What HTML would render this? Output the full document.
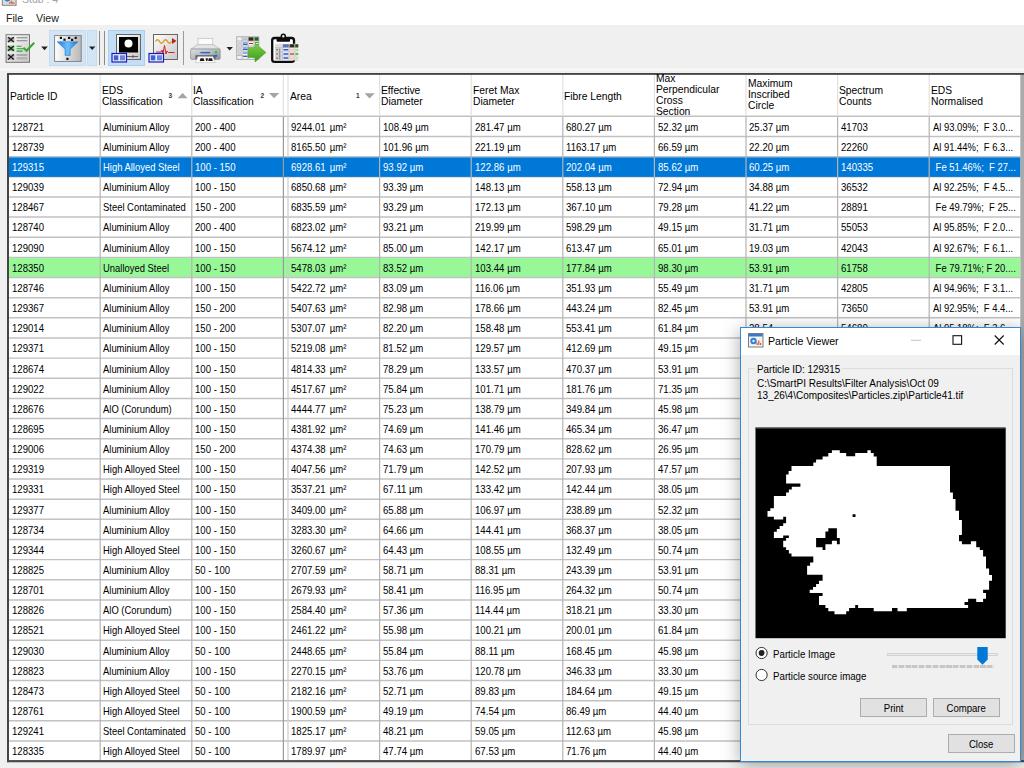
<!DOCTYPE html>
<html><head><meta charset="utf-8"><title>Stub : 4</title>
<style>
html,body{margin:0;padding:0;}
body{width:1024px;height:768px;overflow:hidden;background:#f0f0f0;position:relative;font-family:"Liberation Sans",sans-serif;color:#000;}
.abs{position:absolute;}
#menubar{position:absolute;left:0;top:0;width:1024px;height:25px;background:#fff;}
.menu{position:absolute;top:11.5px;font-size:11.3px;color:#222;white-space:nowrap;transform-origin:0 50%;transform:scaleX(.94);}
.c{position:absolute;font-size:10.8px;line-height:12px;white-space:pre;transform:scaleX(.915);transform-origin:0 50%;color:#000;}
.h{position:absolute;font-size:10.9px;line-height:11.1px;white-space:pre;transform:scaleX(.945);transform-origin:0 50%;color:#000;}
.sel .c{color:#fff;}
</style></head><body>

<div id="menubar"></div>
<svg class="abs" style="left:0;top:0;" width="70" height="8" viewBox="0 0 70 8"><rect x="2.3" y="-8" width="13.8" height="13.3" fill="#dcdcdc" stroke="#858585" stroke-width="1"/><path d="M4.8 -3h5.2v3.6q-2.6 2.200-5.2 0z" fill="#2f7fd8"/><path d="M9.6 3.8v-1.600M11.2 3.8v-3M12.8 3.8v-2M14.2 3.8v-1" stroke="#d8501e" stroke-width="1.1"/></svg>
<div class="abs" style="left:21.7px;top:-7.4px;font-size:11.3px;color:#a2a2a2;white-space:nowrap;transform:scaleX(.93);transform-origin:0 50%;">Stub : 4</div>
<div class="menu" style="left:6.2px;">File</div><div class="menu" style="left:35.6px;">View</div>
<div class="abs" style="left:49.2px;top:30.2px;width:36.6px;height:35.4px;background:#d3e5f5;border:1px solid #c3dcf2;box-sizing:border-box;"></div>
<div class="abs" style="left:87px;top:30.2px;width:9.8px;height:35.4px;background:#d3e5f5;border:1px solid #c3dcf2;box-sizing:border-box;"></div>
<div class="abs" style="left:108px;top:30px;width:37px;height:35.5px;background:#c4def5;border:1px solid #a9d0f2;box-sizing:border-box;"></div>
<div class="abs" style="left:99.3px;top:31px;width:1px;height:34px;background:#8a8a8a;"></div>
<div class="abs" style="left:104px;top:31px;width:1px;height:34px;background:#8a8a8a;"></div>
<div class="abs" style="left:183.2px;top:31px;width:1px;height:34px;background:#9a9a9a;"></div>
<svg class="abs" style="left:0;top:26px;" width="320" height="46" viewBox="0 26 320 46">
<defs>
<linearGradient id="gp" x1="0" y1="0" x2="1" y2="1"><stop offset="0" stop-color="#fdfdfd"/><stop offset="1" stop-color="#c8c8c8"/></linearGradient>
<linearGradient id="gp2" x1="0" y1="0" x2="1" y2="0"><stop offset="0" stop-color="#ffffff"/><stop offset="1" stop-color="#b8b8b8"/></linearGradient>
<linearGradient id="gpr" x1="0" y1="0" x2="1" y2="1"><stop offset="0" stop-color="#dfe1e3"/><stop offset="1" stop-color="#8f9296"/></linearGradient>
<linearGradient id="gf" x1="0" y1="0" x2="1" y2="0"><stop offset="0" stop-color="#167be0"/><stop offset=".5" stop-color="#6cc0fb"/><stop offset="1" stop-color="#167be0"/></linearGradient>
<linearGradient id="gg" x1="0" y1="0" x2="0" y2="1"><stop offset="0" stop-color="#7fd14a"/><stop offset="1" stop-color="#3f9a1c"/></linearGradient>
</defs>
<!-- icon1 checklist -->
<rect x="6.1" y="34.7" width="23.4" height="27.6" fill="url(#gp)" stroke="#747474" stroke-width="1"/>
<g fill="#b4b4b4"><rect x="7.4" y="36.8" width="7" height="5.6"/><rect x="7.4" y="45.6" width="7" height="5.6" fill="#7cc87c"/><rect x="7.4" y="54.2" width="7" height="5.6"/></g><g stroke="#1c1c1c" stroke-width="1.35" fill="none"><path d="M8 37.2l5.800 4.800m0-4.800l-5.800 4.800M8 46l5.800 4.800m0-4.800l-5.800 4.800M8 54.6l5.800 4.800m0-4.800l-5.800 4.800"/></g>
<g stroke="#808080" stroke-width="1.1"><path d="M16.6 37.8h10.8M16.6 40.8h10.8M16.6 55h10.8"/></g><rect x="16.6" y="57" width="10.8" height="2.6" fill="#b4b4b4"/>
<g stroke="#2da32d" stroke-width="1.1"><path d="M16.6 46.3h5M16.6 48.7h7M16.6 51.1h6"/></g>
<path d="M23.4 47.8l3.200 3L34.2 42.8" stroke="#35a835" stroke-width="2.1" fill="none"/>
<path d="M41.2 46.6h6.6l-3.3 3.6z" fill="#222"/>
<!-- icon2 filter -->
<rect x="54.6" y="35.6" width="26.6" height="25.8" fill="url(#gp2)" stroke="#7c7c7c" stroke-width=".9"/>
<path d="M57.3 41.8h20.6l-7.7 7.4v6.2h-5.2v-6.2z" fill="url(#gf)" stroke="#1876c9" stroke-width=".5"/>
<g fill="#111"><rect x="59.8" y="36.8" width="2.2" height="2.2"/><rect x="63.4" y="38.6" width="2.2" height="2.2"/><rect x="68" y="36.8" width="2.2" height="2.2"/><rect x="71" y="38.8" width="2.2" height="2.2"/><rect x="74.6" y="36.8" width="2.2" height="2.2"/><rect x="66.3" y="57.8" width="2.2" height="2.2"/></g>
<path d="M89 46.6h6.400l-3.200 3.400z" fill="#222"/>
<!-- icon3 particle image -->
<rect x="116.5" y="34.5" width="24" height="25" fill="url(#gp)" stroke="#666" stroke-width="1"/>
<rect x="119" y="37" width="19" height="15.5" fill="#000"/>
<circle cx="128.5" cy="43.5" r="4" fill="#fff"/>
<path d="M127 56.500h11M133 55v3" stroke="#444" stroke-width=".8"/>
<rect x="112" y="53.5" width="14.5" height="8.5" fill="#e8ecff" stroke="#1a1ab8" stroke-width="1.2"/>
<rect x="113.8" y="55.3" width="4.5" height="5" fill="#3a62d0"/><rect x="120" y="55.3" width="5" height="5" fill="#6a86d8"/>
<!-- icon4 spectrum -->
<rect x="153.5" y="34.5" width="24" height="25" fill="url(#gp)" stroke="#666" stroke-width="1"/>
<path d="M155.500 41.500q2-3.500 4 0t4 0 4 0 4 0" stroke="#d99a1a" stroke-width="1.4" fill="none"/>
<path d="M172 38l4.500 3-4.500 3z" fill="#c02020"/>
<path d="M156 52h5l1-2 1 3.500 1.500-8 1.500 8.500 1-3 1.500 1.500h6" stroke="#d02020" stroke-width="1" fill="none"/>
<rect x="149" y="53.5" width="14.5" height="8.5" fill="#e8ecff" stroke="#1a1ab8" stroke-width="1.2"/>
<rect x="150.8" y="55.3" width="4.5" height="5" fill="#3a62d0"/><rect x="157" y="55.3" width="5" height="5" fill="#6a86d8"/>
<!-- printer -->
<rect x="198" y="38.3" width="14.8" height="9.5" fill="#fbfbfb" stroke="#bdbdbd" stroke-width=".7"/>
<path d="M197.6 44.6h15.8l6.8 4.600h-29.400z" fill="#e2e4e6" stroke="#a6a8ab" stroke-width=".6"/>
<rect x="190.6" y="49" width="29.6" height="10.4" rx="1.3" fill="url(#gpr)" stroke="#8b8e92" stroke-width=".7"/>
<rect x="195.5" y="55.2" width="20" height="4.2" fill="#5a5c60"/>
<rect x="200.4" y="51.9" width="9.6" height="1.4" fill="#2c5fe0"/>
<rect x="214.7" y="51.2" width="2.6" height="2" fill="#35c435"/><rect x="214.7" y="54.7" width="2.6" height="2" fill="#2c62e0"/>
<path d="M195.5 62.600l2.3-6.200h15.200l2.3 6.200z" fill="#fdfdfd" stroke="#b0b0b0" stroke-width=".5"/>
<path d="M200.5 58.300h3l1 2.600h-4.800zM205.5 58.300h2.600l-.8 2.600h-1.200zM208.8 58.300h3.200l.8 2.600h-4.600z" fill="#1a1a1a"/>
<path d="M226.5 47h6.400l-3.2 3.400z" fill="#222"/>
<!-- table export -->
<rect x="236.8" y="36.8" width="22" height="22.5" fill="#f2f2f2" stroke="#9a9a9a" stroke-width=".8"/>
<path d="M242 36.800v22.500M248 36.800v22.500M254 36.800v22.500M236.800 41h22M236.800 46h22M236.800 51h22M236.800 55.500h22" stroke="#a8a8a8" stroke-width=".7"/>
<rect x="242.5" y="37.3" width="5" height="3.4" fill="#b9c3d8"/><rect x="248.5" y="37.3" width="5" height="3.4" fill="#3b2a18"/><rect x="254.5" y="37.3" width="4" height="3.4" fill="#275a27"/>
<rect x="237.5" y="42" width="4" height="3" fill="#cfcfcf"/><rect x="237.5" y="47" width="4" height="3.5" fill="#cfcfcf"/><rect x="237.5" y="52" width="4" height="3" fill="#cfcfcf"/>
<path d="M243 43h4.500M243 44.500h4.500M243 48h4.500M243 49.500h4.500M243 53h4.500M243 56.500h4.5" stroke="#2f62d8" stroke-width="1"/>
<path d="M249 43.500h4" stroke="#d02020" stroke-width="1"/><path d="M255 42.500h3.500M255 44.500h3.5" stroke="#34b234" stroke-width="1"/>
<path d="M248 47.500h7v-4.500l11 9.500-11 9.500v-4.500h-7z" fill="url(#gg)" stroke="#4aa522" stroke-width=".5"/>
<!-- clipboard -->
<rect x="272.2" y="38" width="21.8" height="23.8" rx="2.4" fill="#fff" stroke="#0c0c0c" stroke-width="2.3"/>
<rect x="276.6" y="38.2" width="13.4" height="3.6" rx=".8" fill="#0c0c0c"/>
<circle cx="283.3" cy="36.3" r="2" fill="#f0f0f0" stroke="#0c0c0c" stroke-width="1.5"/>
<rect x="275" y="43.8" width="23.3" height="16.4" fill="#f4f4f4"/>
<rect x="275" y="43.8" width="7.3" height="16.4" fill="#dedede"/>
<path d="M282.5 43.800v16.400M289.2 43.800v16.400M294.8 43.800v16.400M275 47.700h23.300M275 51.900h23.300M275 56h23.300M275 60.200h23.3" stroke="#b4b4b4" stroke-width=".6"/>
<rect x="283" y="44.2" width="5.8" height="3.2" fill="#5a74b8"/><rect x="289.6" y="44.2" width="4.8" height="3.2" fill="#3a2614"/><rect x="295.2" y="44.2" width="3.1" height="3.2" fill="#1f4f1f"/>
<path d="M283.4 49.800h5M283.4 54h5M283.4 58.100h5" stroke="#2b58e0" stroke-width="1.5"/>
<path d="M290 49.800h4M290 58.100h4" stroke="#f0b8a0" stroke-width="1.3"/><path d="M290 54h4" stroke="#d8481e" stroke-width="1.5"/>
<path d="M295.4 49.800h2.900M295.4 58.100h2.9" stroke="#8fdc8f" stroke-width="1.4"/><path d="M295.4 54h2.9" stroke="#22b022" stroke-width="1.5"/>
<path d="M276 49.800h2M276 54h2M276 58.100h2" stroke="#444" stroke-width=".9"/>
<path d="M279.6 48.400v11.4" stroke="#9a9a9a" stroke-width="1.6"/>
</svg>

<svg class="abs" style="left:0;top:0;" width="1024" height="768" viewBox="0 0 1024 768">
<rect x="0" y="68.6" width="1024" height="1.9" fill="#fafafa"/>
<rect x="7" y="73" width="1030" height="689.2" fill="#ababab"/>
<rect x="9" y="74.8" width="1011.3" height="685.4" fill="#fff"/>
<rect x="9" y="258.05" width="1011.3" height="19.25" fill="#98f898"/>
<path d="M9 116.30h1011.3 M9 136.45h1011.3 M9 156.60h1011.3 M9 176.75h1011.3 M9 196.90h1011.3 M9 217.05h1011.3 M9 237.20h1011.3 M9 257.35h1011.3 M9 277.50h1011.3 M9 297.65h1011.3 M9 317.80h1011.3 M9 337.95h1011.3 M9 358.10h1011.3 M9 378.25h1011.3 M9 398.40h1011.3 M9 418.55h1011.3 M9 438.70h1011.3 M9 458.85h1011.3 M9 479.00h1011.3 M9 499.15h1011.3 M9 519.30h1011.3 M9 539.45h1011.3 M9 559.60h1011.3 M9 579.75h1011.3 M9 599.90h1011.3 M9 620.05h1011.3 M9 640.20h1011.3 M9 660.35h1011.3 M9 680.50h1011.3 M9 700.65h1011.3 M9 720.80h1011.3 M9 740.95h1011.3" stroke="#c1c1c1" stroke-width="1.45" fill="none"/>
<rect x="9" y="157.30" width="1011.3" height="19.60" fill="#0078d7"/>
<path d="M100.20 116.3V760.2 M191.80 116.3V760.2 M379.60 116.3V760.2 M471.20 116.3V760.2 M562.80 116.3V760.2 M654.40 116.3V760.2 M746.00 116.3V760.2 M837.60 116.3V760.2 M929.20 116.3V760.2" stroke="#b4b4b4" stroke-width="1.2" fill="none"/>
<path d="M283.4 116.3V760.2" stroke="#9a9a9a" stroke-width="1.2" fill="none"/>
<path d="M288 116.3V157.30M288 176.75V760.2" stroke="#cdcdcd" stroke-width="1.2" fill="none"/>
<path d="M100.20 74.800V116.3 M191.80 74.800V116.3 M288.00 74.800V116.3 M379.60 74.800V116.3 M471.20 74.800V116.3 M562.80 74.800V116.3 M654.40 74.800V116.3 M746.00 74.800V116.3 M837.60 74.800V116.3 M929.20 74.800V116.3 M283.40 74.800V116.3" stroke="#e2e2e2" stroke-width="1.2" fill="none"/>
<path d="M8 73V762.200M7 73.900H1024M7 761.150H1024" stroke="#434343" stroke-width="0" fill="none"/>
<rect x="7" y="73" width="2" height="689.2" fill="#454545"/>
<rect x="7" y="73" width="1017" height="1.8" fill="#454545"/>
<rect x="7" y="760.1" width="1017" height="2.1" fill="#4a4a4a"/>
</svg>
<div class="h" style="left:10.2px;top:90.65px;">Particle ID</div>
<div class="h" style="left:101.8px;top:84.50px;">EDS<br>Classification</div>
<div class="h" style="left:193.4px;top:84.50px;">IA<br>Classification</div>
<div class="h" style="left:289.6px;top:90.65px;">Area</div>
<div class="h" style="left:381.2px;top:84.50px;">Effective<br>Diameter</div>
<div class="h" style="left:472.8px;top:84.50px;">Feret Max<br>Diameter</div>
<div class="h" style="left:564.4px;top:90.65px;">Fibre Length</div>
<div class="h" style="left:656.0px;top:72.60px;">Max<br>Perpendicular<br>Cross<br>Section</div>
<div class="h" style="left:747.6px;top:77.95px;">Maximum<br>Inscribed<br>Circle</div>
<div class="h" style="left:839.2px;top:84.50px;">Spectrum<br>Counts</div>
<div class="h" style="left:930.8px;top:84.50px;">EDS<br>Normalised</div>
<svg class="abs" style="left:160px;top:80px;" width="220" height="30" viewBox="160 80 220 30">
<path d="M177.6 98.2l5-5.3 5 5.3z" fill="#a4a4a4"/>
<path d="M269 93h10.2l-5.1 5.3z" fill="#a4a4a4"/>
<path d="M364.5 93.2h10.2l-5.1 5.3z" fill="#a4a4a4"/>
</svg>
<div class="abs" style="left:168.4px;top:91.6px;font-size:6.5px;font-weight:bold;color:#333;">3</div>
<div class="abs" style="left:260.5px;top:91.6px;font-size:6.5px;font-weight:bold;color:#333;">2</div>
<div class="abs" style="left:356px;top:91.8px;font-size:6.5px;font-weight:bold;color:#333;">1</div>

<div>
<div class="c" style="left:11.9px;top:120.70px;transform:scaleX(0.887);">128721</div>
<div class="c" style="left:102.8px;top:120.70px;transform:scaleX(0.873);">Aluminium Alloy</div>
<div class="c" style="left:195.1px;top:120.70px;transform:scaleX(0.887);">200 - 400</div>
<div class="c" style="left:291.3px;top:120.70px;transform:scaleX(0.887);word-spacing:1.6px;">9244.01 µm²</div>
<div class="c" style="left:382.9px;top:120.70px;transform:scaleX(0.892);">108.49 µm</div>
<div class="c" style="left:474.5px;top:120.70px;transform:scaleX(0.892);">281.47 µm</div>
<div class="c" style="left:566.1px;top:120.70px;transform:scaleX(0.892);">680.27 µm</div>
<div class="c" style="left:657.7px;top:120.70px;transform:scaleX(0.892);">52.32 µm</div>
<div class="c" style="left:749.3px;top:120.70px;transform:scaleX(0.892);">25.37 µm</div>
<div class="c" style="left:840.9px;top:120.70px;transform:scaleX(0.892);">41703</div>
<div class="c" style="left:932.5px;top:120.70px;transform:scaleX(0.873);">Al 93.09%;  F 3.0...</div>
</div>
<div>
<div class="c" style="left:11.9px;top:140.85px;transform:scaleX(0.887);">128739</div>
<div class="c" style="left:102.8px;top:140.85px;transform:scaleX(0.873);">Aluminium Alloy</div>
<div class="c" style="left:195.1px;top:140.85px;transform:scaleX(0.887);">200 - 400</div>
<div class="c" style="left:291.3px;top:140.85px;transform:scaleX(0.887);word-spacing:1.6px;">8165.50 µm²</div>
<div class="c" style="left:382.9px;top:140.85px;transform:scaleX(0.892);">101.96 µm</div>
<div class="c" style="left:474.5px;top:140.85px;transform:scaleX(0.892);">221.19 µm</div>
<div class="c" style="left:566.1px;top:140.85px;transform:scaleX(0.892);">1163.17 µm</div>
<div class="c" style="left:657.7px;top:140.85px;transform:scaleX(0.892);">66.59 µm</div>
<div class="c" style="left:749.3px;top:140.85px;transform:scaleX(0.892);">22.20 µm</div>
<div class="c" style="left:840.9px;top:140.85px;transform:scaleX(0.892);">22260</div>
<div class="c" style="left:932.5px;top:140.85px;transform:scaleX(0.873);">Al 91.44%;  F 6.3...</div>
</div>
<div class="sel">
<div class="c" style="left:11.9px;top:161.00px;transform:scaleX(0.887);">129315</div>
<div class="c" style="left:102.8px;top:161.00px;transform:scaleX(0.873);">High Alloyed Steel</div>
<div class="c" style="left:195.1px;top:161.00px;transform:scaleX(0.887);">100 - 150</div>
<div class="c" style="left:291.3px;top:161.00px;transform:scaleX(0.887);word-spacing:1.6px;">6928.61 µm²</div>
<div class="c" style="left:382.9px;top:161.00px;transform:scaleX(0.892);">93.92 µm</div>
<div class="c" style="left:474.5px;top:161.00px;transform:scaleX(0.892);">122.86 µm</div>
<div class="c" style="left:566.1px;top:161.00px;transform:scaleX(0.892);">202.04 µm</div>
<div class="c" style="left:657.7px;top:161.00px;transform:scaleX(0.892);">85.62 µm</div>
<div class="c" style="left:749.3px;top:161.00px;transform:scaleX(0.892);">60.25 µm</div>
<div class="c" style="left:840.9px;top:161.00px;transform:scaleX(0.892);">140335</div>
<div class="c" style="left:932.5px;top:161.00px;transform:scaleX(0.873);"> Fe 51.46%;  F 27...</div>
</div>
<div>
<div class="c" style="left:11.9px;top:181.15px;transform:scaleX(0.887);">129039</div>
<div class="c" style="left:102.8px;top:181.15px;transform:scaleX(0.873);">Aluminium Alloy</div>
<div class="c" style="left:195.1px;top:181.15px;transform:scaleX(0.887);">100 - 150</div>
<div class="c" style="left:291.3px;top:181.15px;transform:scaleX(0.887);word-spacing:1.6px;">6850.68 µm²</div>
<div class="c" style="left:382.9px;top:181.15px;transform:scaleX(0.892);">93.39 µm</div>
<div class="c" style="left:474.5px;top:181.15px;transform:scaleX(0.892);">148.13 µm</div>
<div class="c" style="left:566.1px;top:181.15px;transform:scaleX(0.892);">558.13 µm</div>
<div class="c" style="left:657.7px;top:181.15px;transform:scaleX(0.892);">72.94 µm</div>
<div class="c" style="left:749.3px;top:181.15px;transform:scaleX(0.892);">34.88 µm</div>
<div class="c" style="left:840.9px;top:181.15px;transform:scaleX(0.892);">36532</div>
<div class="c" style="left:932.5px;top:181.15px;transform:scaleX(0.873);">Al 92.25%;  F 4.5...</div>
</div>
<div>
<div class="c" style="left:11.9px;top:201.30px;transform:scaleX(0.887);">128467</div>
<div class="c" style="left:102.8px;top:201.30px;transform:scaleX(0.873);">Steel Contaminated</div>
<div class="c" style="left:195.1px;top:201.30px;transform:scaleX(0.887);">150 - 200</div>
<div class="c" style="left:291.3px;top:201.30px;transform:scaleX(0.887);word-spacing:1.6px;">6835.59 µm²</div>
<div class="c" style="left:382.9px;top:201.30px;transform:scaleX(0.892);">93.29 µm</div>
<div class="c" style="left:474.5px;top:201.30px;transform:scaleX(0.892);">172.13 µm</div>
<div class="c" style="left:566.1px;top:201.30px;transform:scaleX(0.892);">367.10 µm</div>
<div class="c" style="left:657.7px;top:201.30px;transform:scaleX(0.892);">79.28 µm</div>
<div class="c" style="left:749.3px;top:201.30px;transform:scaleX(0.892);">41.22 µm</div>
<div class="c" style="left:840.9px;top:201.30px;transform:scaleX(0.892);">28891</div>
<div class="c" style="left:932.5px;top:201.30px;transform:scaleX(0.873);"> Fe 49.79%;  F 25...</div>
</div>
<div>
<div class="c" style="left:11.9px;top:221.45px;transform:scaleX(0.887);">128740</div>
<div class="c" style="left:102.8px;top:221.45px;transform:scaleX(0.873);">Aluminium Alloy</div>
<div class="c" style="left:195.1px;top:221.45px;transform:scaleX(0.887);">200 - 400</div>
<div class="c" style="left:291.3px;top:221.45px;transform:scaleX(0.887);word-spacing:1.6px;">6823.02 µm²</div>
<div class="c" style="left:382.9px;top:221.45px;transform:scaleX(0.892);">93.21 µm</div>
<div class="c" style="left:474.5px;top:221.45px;transform:scaleX(0.892);">219.99 µm</div>
<div class="c" style="left:566.1px;top:221.45px;transform:scaleX(0.892);">598.29 µm</div>
<div class="c" style="left:657.7px;top:221.45px;transform:scaleX(0.892);">49.15 µm</div>
<div class="c" style="left:749.3px;top:221.45px;transform:scaleX(0.892);">31.71 µm</div>
<div class="c" style="left:840.9px;top:221.45px;transform:scaleX(0.892);">55053</div>
<div class="c" style="left:932.5px;top:221.45px;transform:scaleX(0.873);">Al 95.85%;  F 2.0...</div>
</div>
<div>
<div class="c" style="left:11.9px;top:241.60px;transform:scaleX(0.887);">129090</div>
<div class="c" style="left:102.8px;top:241.60px;transform:scaleX(0.873);">Aluminium Alloy</div>
<div class="c" style="left:195.1px;top:241.60px;transform:scaleX(0.887);">100 - 150</div>
<div class="c" style="left:291.3px;top:241.60px;transform:scaleX(0.887);word-spacing:1.6px;">5674.12 µm²</div>
<div class="c" style="left:382.9px;top:241.60px;transform:scaleX(0.892);">85.00 µm</div>
<div class="c" style="left:474.5px;top:241.60px;transform:scaleX(0.892);">142.17 µm</div>
<div class="c" style="left:566.1px;top:241.60px;transform:scaleX(0.892);">613.47 µm</div>
<div class="c" style="left:657.7px;top:241.60px;transform:scaleX(0.892);">65.01 µm</div>
<div class="c" style="left:749.3px;top:241.60px;transform:scaleX(0.892);">19.03 µm</div>
<div class="c" style="left:840.9px;top:241.60px;transform:scaleX(0.892);">42043</div>
<div class="c" style="left:932.5px;top:241.60px;transform:scaleX(0.873);">Al 92.67%;  F 6.1...</div>
</div>
<div>
<div class="c" style="left:11.9px;top:261.75px;transform:scaleX(0.887);">128350</div>
<div class="c" style="left:102.8px;top:261.75px;transform:scaleX(0.873);">Unalloyed Steel</div>
<div class="c" style="left:195.1px;top:261.75px;transform:scaleX(0.887);">100 - 150</div>
<div class="c" style="left:291.3px;top:261.75px;transform:scaleX(0.887);word-spacing:1.6px;">5478.03 µm²</div>
<div class="c" style="left:382.9px;top:261.75px;transform:scaleX(0.892);">83.52 µm</div>
<div class="c" style="left:474.5px;top:261.75px;transform:scaleX(0.892);">103.44 µm</div>
<div class="c" style="left:566.1px;top:261.75px;transform:scaleX(0.892);">177.84 µm</div>
<div class="c" style="left:657.7px;top:261.75px;transform:scaleX(0.892);">98.30 µm</div>
<div class="c" style="left:749.3px;top:261.75px;transform:scaleX(0.892);">53.91 µm</div>
<div class="c" style="left:840.9px;top:261.75px;transform:scaleX(0.892);">61758</div>
<div class="c" style="left:932.5px;top:261.75px;transform:scaleX(0.873);"> Fe 79.71%; F 20....</div>
</div>
<div>
<div class="c" style="left:11.9px;top:281.90px;transform:scaleX(0.887);">128746</div>
<div class="c" style="left:102.8px;top:281.90px;transform:scaleX(0.873);">Aluminium Alloy</div>
<div class="c" style="left:195.1px;top:281.90px;transform:scaleX(0.887);">100 - 150</div>
<div class="c" style="left:291.3px;top:281.90px;transform:scaleX(0.887);word-spacing:1.6px;">5422.72 µm²</div>
<div class="c" style="left:382.9px;top:281.90px;transform:scaleX(0.892);">83.09 µm</div>
<div class="c" style="left:474.5px;top:281.90px;transform:scaleX(0.892);">116.06 µm</div>
<div class="c" style="left:566.1px;top:281.90px;transform:scaleX(0.892);">351.93 µm</div>
<div class="c" style="left:657.7px;top:281.90px;transform:scaleX(0.892);">55.49 µm</div>
<div class="c" style="left:749.3px;top:281.90px;transform:scaleX(0.892);">31.71 µm</div>
<div class="c" style="left:840.9px;top:281.90px;transform:scaleX(0.892);">42805</div>
<div class="c" style="left:932.5px;top:281.90px;transform:scaleX(0.873);">Al 94.96%;  F 3.1...</div>
</div>
<div>
<div class="c" style="left:11.9px;top:302.05px;transform:scaleX(0.887);">129367</div>
<div class="c" style="left:102.8px;top:302.05px;transform:scaleX(0.873);">Aluminium Alloy</div>
<div class="c" style="left:195.1px;top:302.05px;transform:scaleX(0.887);">150 - 200</div>
<div class="c" style="left:291.3px;top:302.05px;transform:scaleX(0.887);word-spacing:1.6px;">5407.63 µm²</div>
<div class="c" style="left:382.9px;top:302.05px;transform:scaleX(0.892);">82.98 µm</div>
<div class="c" style="left:474.5px;top:302.05px;transform:scaleX(0.892);">178.66 µm</div>
<div class="c" style="left:566.1px;top:302.05px;transform:scaleX(0.892);">443.24 µm</div>
<div class="c" style="left:657.7px;top:302.05px;transform:scaleX(0.892);">82.45 µm</div>
<div class="c" style="left:749.3px;top:302.05px;transform:scaleX(0.892);">53.91 µm</div>
<div class="c" style="left:840.9px;top:302.05px;transform:scaleX(0.892);">73650</div>
<div class="c" style="left:932.5px;top:302.05px;transform:scaleX(0.873);">Al 92.95%;  F 4.4...</div>
</div>
<div>
<div class="c" style="left:11.9px;top:322.20px;transform:scaleX(0.887);">129014</div>
<div class="c" style="left:102.8px;top:322.20px;transform:scaleX(0.873);">Aluminium Alloy</div>
<div class="c" style="left:195.1px;top:322.20px;transform:scaleX(0.887);">150 - 200</div>
<div class="c" style="left:291.3px;top:322.20px;transform:scaleX(0.887);word-spacing:1.6px;">5307.07 µm²</div>
<div class="c" style="left:382.9px;top:322.20px;transform:scaleX(0.892);">82.20 µm</div>
<div class="c" style="left:474.5px;top:322.20px;transform:scaleX(0.892);">158.48 µm</div>
<div class="c" style="left:566.1px;top:322.20px;transform:scaleX(0.892);">553.41 µm</div>
<div class="c" style="left:657.7px;top:322.20px;transform:scaleX(0.892);">61.84 µm</div>
<div class="c" style="left:749.3px;top:322.20px;transform:scaleX(0.892);">28.54</div>
<div class="c" style="left:840.9px;top:322.20px;transform:scaleX(0.892);">54680</div>
<div class="c" style="left:932.5px;top:322.20px;transform:scaleX(0.873);">Al 95.18%;  F 3.6...</div>
</div>
<div>
<div class="c" style="left:11.9px;top:342.35px;transform:scaleX(0.887);">129371</div>
<div class="c" style="left:102.8px;top:342.35px;transform:scaleX(0.873);">Aluminium Alloy</div>
<div class="c" style="left:195.1px;top:342.35px;transform:scaleX(0.887);">100 - 150</div>
<div class="c" style="left:291.3px;top:342.35px;transform:scaleX(0.887);word-spacing:1.6px;">5219.08 µm²</div>
<div class="c" style="left:382.9px;top:342.35px;transform:scaleX(0.892);">81.52 µm</div>
<div class="c" style="left:474.5px;top:342.35px;transform:scaleX(0.892);">129.57 µm</div>
<div class="c" style="left:566.1px;top:342.35px;transform:scaleX(0.892);">412.69 µm</div>
<div class="c" style="left:657.7px;top:342.35px;transform:scaleX(0.892);">49.15 µm</div>
</div>
<div>
<div class="c" style="left:11.9px;top:362.50px;transform:scaleX(0.887);">128674</div>
<div class="c" style="left:102.8px;top:362.50px;transform:scaleX(0.873);">Aluminium Alloy</div>
<div class="c" style="left:195.1px;top:362.50px;transform:scaleX(0.887);">100 - 150</div>
<div class="c" style="left:291.3px;top:362.50px;transform:scaleX(0.887);word-spacing:1.6px;">4814.33 µm²</div>
<div class="c" style="left:382.9px;top:362.50px;transform:scaleX(0.892);">78.29 µm</div>
<div class="c" style="left:474.5px;top:362.50px;transform:scaleX(0.892);">133.57 µm</div>
<div class="c" style="left:566.1px;top:362.50px;transform:scaleX(0.892);">470.37 µm</div>
<div class="c" style="left:657.7px;top:362.50px;transform:scaleX(0.892);">53.91 µm</div>
</div>
<div>
<div class="c" style="left:11.9px;top:382.65px;transform:scaleX(0.887);">129022</div>
<div class="c" style="left:102.8px;top:382.65px;transform:scaleX(0.873);">Aluminium Alloy</div>
<div class="c" style="left:195.1px;top:382.65px;transform:scaleX(0.887);">100 - 150</div>
<div class="c" style="left:291.3px;top:382.65px;transform:scaleX(0.887);word-spacing:1.6px;">4517.67 µm²</div>
<div class="c" style="left:382.9px;top:382.65px;transform:scaleX(0.892);">75.84 µm</div>
<div class="c" style="left:474.5px;top:382.65px;transform:scaleX(0.892);">101.71 µm</div>
<div class="c" style="left:566.1px;top:382.65px;transform:scaleX(0.892);">181.76 µm</div>
<div class="c" style="left:657.7px;top:382.65px;transform:scaleX(0.892);">71.35 µm</div>
</div>
<div>
<div class="c" style="left:11.9px;top:402.80px;transform:scaleX(0.887);">128676</div>
<div class="c" style="left:102.8px;top:402.80px;transform:scaleX(0.873);">AlO (Corundum)</div>
<div class="c" style="left:195.1px;top:402.80px;transform:scaleX(0.887);">100 - 150</div>
<div class="c" style="left:291.3px;top:402.80px;transform:scaleX(0.887);word-spacing:1.6px;">4444.77 µm²</div>
<div class="c" style="left:382.9px;top:402.80px;transform:scaleX(0.892);">75.23 µm</div>
<div class="c" style="left:474.5px;top:402.80px;transform:scaleX(0.892);">138.79 µm</div>
<div class="c" style="left:566.1px;top:402.80px;transform:scaleX(0.892);">349.84 µm</div>
<div class="c" style="left:657.7px;top:402.80px;transform:scaleX(0.892);">45.98 µm</div>
</div>
<div>
<div class="c" style="left:11.9px;top:422.95px;transform:scaleX(0.887);">128695</div>
<div class="c" style="left:102.8px;top:422.95px;transform:scaleX(0.873);">Aluminium Alloy</div>
<div class="c" style="left:195.1px;top:422.95px;transform:scaleX(0.887);">100 - 150</div>
<div class="c" style="left:291.3px;top:422.95px;transform:scaleX(0.887);word-spacing:1.6px;">4381.92 µm²</div>
<div class="c" style="left:382.9px;top:422.95px;transform:scaleX(0.892);">74.69 µm</div>
<div class="c" style="left:474.5px;top:422.95px;transform:scaleX(0.892);">141.46 µm</div>
<div class="c" style="left:566.1px;top:422.95px;transform:scaleX(0.892);">465.34 µm</div>
<div class="c" style="left:657.7px;top:422.95px;transform:scaleX(0.892);">36.47 µm</div>
</div>
<div>
<div class="c" style="left:11.9px;top:443.10px;transform:scaleX(0.887);">129006</div>
<div class="c" style="left:102.8px;top:443.10px;transform:scaleX(0.873);">Aluminium Alloy</div>
<div class="c" style="left:195.1px;top:443.10px;transform:scaleX(0.887);">150 - 200</div>
<div class="c" style="left:291.3px;top:443.10px;transform:scaleX(0.887);word-spacing:1.6px;">4374.38 µm²</div>
<div class="c" style="left:382.9px;top:443.10px;transform:scaleX(0.892);">74.63 µm</div>
<div class="c" style="left:474.5px;top:443.10px;transform:scaleX(0.892);">170.79 µm</div>
<div class="c" style="left:566.1px;top:443.10px;transform:scaleX(0.892);">828.62 µm</div>
<div class="c" style="left:657.7px;top:443.10px;transform:scaleX(0.892);">26.95 µm</div>
</div>
<div>
<div class="c" style="left:11.9px;top:463.25px;transform:scaleX(0.887);">129319</div>
<div class="c" style="left:102.8px;top:463.25px;transform:scaleX(0.873);">High Alloyed Steel</div>
<div class="c" style="left:195.1px;top:463.25px;transform:scaleX(0.887);">100 - 150</div>
<div class="c" style="left:291.3px;top:463.25px;transform:scaleX(0.887);word-spacing:1.6px;">4047.56 µm²</div>
<div class="c" style="left:382.9px;top:463.25px;transform:scaleX(0.892);">71.79 µm</div>
<div class="c" style="left:474.5px;top:463.25px;transform:scaleX(0.892);">142.52 µm</div>
<div class="c" style="left:566.1px;top:463.25px;transform:scaleX(0.892);">207.93 µm</div>
<div class="c" style="left:657.7px;top:463.25px;transform:scaleX(0.892);">47.57 µm</div>
</div>
<div>
<div class="c" style="left:11.9px;top:483.40px;transform:scaleX(0.887);">129331</div>
<div class="c" style="left:102.8px;top:483.40px;transform:scaleX(0.873);">High Alloyed Steel</div>
<div class="c" style="left:195.1px;top:483.40px;transform:scaleX(0.887);">100 - 150</div>
<div class="c" style="left:291.3px;top:483.40px;transform:scaleX(0.887);word-spacing:1.6px;">3537.21 µm²</div>
<div class="c" style="left:382.9px;top:483.40px;transform:scaleX(0.892);">67.11 µm</div>
<div class="c" style="left:474.5px;top:483.40px;transform:scaleX(0.892);">133.42 µm</div>
<div class="c" style="left:566.1px;top:483.40px;transform:scaleX(0.892);">142.44 µm</div>
<div class="c" style="left:657.7px;top:483.40px;transform:scaleX(0.892);">38.05 µm</div>
</div>
<div>
<div class="c" style="left:11.9px;top:503.55px;transform:scaleX(0.887);">129377</div>
<div class="c" style="left:102.8px;top:503.55px;transform:scaleX(0.873);">Aluminium Alloy</div>
<div class="c" style="left:195.1px;top:503.55px;transform:scaleX(0.887);">100 - 150</div>
<div class="c" style="left:291.3px;top:503.55px;transform:scaleX(0.887);word-spacing:1.6px;">3409.00 µm²</div>
<div class="c" style="left:382.9px;top:503.55px;transform:scaleX(0.892);">65.88 µm</div>
<div class="c" style="left:474.5px;top:503.55px;transform:scaleX(0.892);">106.97 µm</div>
<div class="c" style="left:566.1px;top:503.55px;transform:scaleX(0.892);">238.89 µm</div>
<div class="c" style="left:657.7px;top:503.55px;transform:scaleX(0.892);">52.32 µm</div>
</div>
<div>
<div class="c" style="left:11.9px;top:523.70px;transform:scaleX(0.887);">128734</div>
<div class="c" style="left:102.8px;top:523.70px;transform:scaleX(0.873);">Aluminium Alloy</div>
<div class="c" style="left:195.1px;top:523.70px;transform:scaleX(0.887);">100 - 150</div>
<div class="c" style="left:291.3px;top:523.70px;transform:scaleX(0.887);word-spacing:1.6px;">3283.30 µm²</div>
<div class="c" style="left:382.9px;top:523.70px;transform:scaleX(0.892);">64.66 µm</div>
<div class="c" style="left:474.5px;top:523.70px;transform:scaleX(0.892);">144.41 µm</div>
<div class="c" style="left:566.1px;top:523.70px;transform:scaleX(0.892);">368.37 µm</div>
<div class="c" style="left:657.7px;top:523.70px;transform:scaleX(0.892);">38.05 µm</div>
</div>
<div>
<div class="c" style="left:11.9px;top:543.85px;transform:scaleX(0.887);">129344</div>
<div class="c" style="left:102.8px;top:543.85px;transform:scaleX(0.873);">High Alloyed Steel</div>
<div class="c" style="left:195.1px;top:543.85px;transform:scaleX(0.887);">100 - 150</div>
<div class="c" style="left:291.3px;top:543.85px;transform:scaleX(0.887);word-spacing:1.6px;">3260.67 µm²</div>
<div class="c" style="left:382.9px;top:543.85px;transform:scaleX(0.892);">64.43 µm</div>
<div class="c" style="left:474.5px;top:543.85px;transform:scaleX(0.892);">108.55 µm</div>
<div class="c" style="left:566.1px;top:543.85px;transform:scaleX(0.892);">132.49 µm</div>
<div class="c" style="left:657.7px;top:543.85px;transform:scaleX(0.892);">50.74 µm</div>
</div>
<div>
<div class="c" style="left:11.9px;top:564.00px;transform:scaleX(0.887);">128825</div>
<div class="c" style="left:102.8px;top:564.00px;transform:scaleX(0.873);">Aluminium Alloy</div>
<div class="c" style="left:195.1px;top:564.00px;transform:scaleX(0.887);">50 - 100</div>
<div class="c" style="left:291.3px;top:564.00px;transform:scaleX(0.887);word-spacing:1.6px;">2707.59 µm²</div>
<div class="c" style="left:382.9px;top:564.00px;transform:scaleX(0.892);">58.71 µm</div>
<div class="c" style="left:474.5px;top:564.00px;transform:scaleX(0.892);">88.31 µm</div>
<div class="c" style="left:566.1px;top:564.00px;transform:scaleX(0.892);">243.39 µm</div>
<div class="c" style="left:657.7px;top:564.00px;transform:scaleX(0.892);">53.91 µm</div>
</div>
<div>
<div class="c" style="left:11.9px;top:584.15px;transform:scaleX(0.887);">128701</div>
<div class="c" style="left:102.8px;top:584.15px;transform:scaleX(0.873);">Aluminium Alloy</div>
<div class="c" style="left:195.1px;top:584.15px;transform:scaleX(0.887);">100 - 150</div>
<div class="c" style="left:291.3px;top:584.15px;transform:scaleX(0.887);word-spacing:1.6px;">2679.93 µm²</div>
<div class="c" style="left:382.9px;top:584.15px;transform:scaleX(0.892);">58.41 µm</div>
<div class="c" style="left:474.5px;top:584.15px;transform:scaleX(0.892);">116.95 µm</div>
<div class="c" style="left:566.1px;top:584.15px;transform:scaleX(0.892);">264.32 µm</div>
<div class="c" style="left:657.7px;top:584.15px;transform:scaleX(0.892);">50.74 µm</div>
</div>
<div>
<div class="c" style="left:11.9px;top:604.30px;transform:scaleX(0.887);">128826</div>
<div class="c" style="left:102.8px;top:604.30px;transform:scaleX(0.873);">AlO (Corundum)</div>
<div class="c" style="left:195.1px;top:604.30px;transform:scaleX(0.887);">100 - 150</div>
<div class="c" style="left:291.3px;top:604.30px;transform:scaleX(0.887);word-spacing:1.6px;">2584.40 µm²</div>
<div class="c" style="left:382.9px;top:604.30px;transform:scaleX(0.892);">57.36 µm</div>
<div class="c" style="left:474.5px;top:604.30px;transform:scaleX(0.892);">114.44 µm</div>
<div class="c" style="left:566.1px;top:604.30px;transform:scaleX(0.892);">318.21 µm</div>
<div class="c" style="left:657.7px;top:604.30px;transform:scaleX(0.892);">33.30 µm</div>
</div>
<div>
<div class="c" style="left:11.9px;top:624.45px;transform:scaleX(0.887);">128521</div>
<div class="c" style="left:102.8px;top:624.45px;transform:scaleX(0.873);">High Alloyed Steel</div>
<div class="c" style="left:195.1px;top:624.45px;transform:scaleX(0.887);">100 - 150</div>
<div class="c" style="left:291.3px;top:624.45px;transform:scaleX(0.887);word-spacing:1.6px;">2461.22 µm²</div>
<div class="c" style="left:382.9px;top:624.45px;transform:scaleX(0.892);">55.98 µm</div>
<div class="c" style="left:474.5px;top:624.45px;transform:scaleX(0.892);">100.21 µm</div>
<div class="c" style="left:566.1px;top:624.45px;transform:scaleX(0.892);">200.01 µm</div>
<div class="c" style="left:657.7px;top:624.45px;transform:scaleX(0.892);">61.84 µm</div>
</div>
<div>
<div class="c" style="left:11.9px;top:644.60px;transform:scaleX(0.887);">129030</div>
<div class="c" style="left:102.8px;top:644.60px;transform:scaleX(0.873);">Aluminium Alloy</div>
<div class="c" style="left:195.1px;top:644.60px;transform:scaleX(0.887);">50 - 100</div>
<div class="c" style="left:291.3px;top:644.60px;transform:scaleX(0.887);word-spacing:1.6px;">2448.65 µm²</div>
<div class="c" style="left:382.9px;top:644.60px;transform:scaleX(0.892);">55.84 µm</div>
<div class="c" style="left:474.5px;top:644.60px;transform:scaleX(0.892);">88.11 µm</div>
<div class="c" style="left:566.1px;top:644.60px;transform:scaleX(0.892);">168.45 µm</div>
<div class="c" style="left:657.7px;top:644.60px;transform:scaleX(0.892);">45.98 µm</div>
</div>
<div>
<div class="c" style="left:11.9px;top:664.75px;transform:scaleX(0.887);">128823</div>
<div class="c" style="left:102.8px;top:664.75px;transform:scaleX(0.873);">Aluminium Alloy</div>
<div class="c" style="left:195.1px;top:664.75px;transform:scaleX(0.887);">100 - 150</div>
<div class="c" style="left:291.3px;top:664.75px;transform:scaleX(0.887);word-spacing:1.6px;">2270.15 µm²</div>
<div class="c" style="left:382.9px;top:664.75px;transform:scaleX(0.892);">53.76 µm</div>
<div class="c" style="left:474.5px;top:664.75px;transform:scaleX(0.892);">120.78 µm</div>
<div class="c" style="left:566.1px;top:664.75px;transform:scaleX(0.892);">346.33 µm</div>
<div class="c" style="left:657.7px;top:664.75px;transform:scaleX(0.892);">33.30 µm</div>
</div>
<div>
<div class="c" style="left:11.9px;top:684.90px;transform:scaleX(0.887);">128473</div>
<div class="c" style="left:102.8px;top:684.90px;transform:scaleX(0.873);">High Alloyed Steel</div>
<div class="c" style="left:195.1px;top:684.90px;transform:scaleX(0.887);">50 - 100</div>
<div class="c" style="left:291.3px;top:684.90px;transform:scaleX(0.887);word-spacing:1.6px;">2182.16 µm²</div>
<div class="c" style="left:382.9px;top:684.90px;transform:scaleX(0.892);">52.71 µm</div>
<div class="c" style="left:474.5px;top:684.90px;transform:scaleX(0.892);">89.83 µm</div>
<div class="c" style="left:566.1px;top:684.90px;transform:scaleX(0.892);">184.64 µm</div>
<div class="c" style="left:657.7px;top:684.90px;transform:scaleX(0.892);">49.15 µm</div>
</div>
<div>
<div class="c" style="left:11.9px;top:705.05px;transform:scaleX(0.887);">128761</div>
<div class="c" style="left:102.8px;top:705.05px;transform:scaleX(0.873);">High Alloyed Steel</div>
<div class="c" style="left:195.1px;top:705.05px;transform:scaleX(0.887);">50 - 100</div>
<div class="c" style="left:291.3px;top:705.05px;transform:scaleX(0.887);word-spacing:1.6px;">1900.59 µm²</div>
<div class="c" style="left:382.9px;top:705.05px;transform:scaleX(0.892);">49.19 µm</div>
<div class="c" style="left:474.5px;top:705.05px;transform:scaleX(0.892);">74.54 µm</div>
<div class="c" style="left:566.1px;top:705.05px;transform:scaleX(0.892);">86.49 µm</div>
<div class="c" style="left:657.7px;top:705.05px;transform:scaleX(0.892);">44.40 µm</div>
</div>
<div>
<div class="c" style="left:11.9px;top:725.20px;transform:scaleX(0.887);">129241</div>
<div class="c" style="left:102.8px;top:725.20px;transform:scaleX(0.873);">Steel Contaminated</div>
<div class="c" style="left:195.1px;top:725.20px;transform:scaleX(0.887);">50 - 100</div>
<div class="c" style="left:291.3px;top:725.20px;transform:scaleX(0.887);word-spacing:1.6px;">1825.17 µm²</div>
<div class="c" style="left:382.9px;top:725.20px;transform:scaleX(0.892);">48.21 µm</div>
<div class="c" style="left:474.5px;top:725.20px;transform:scaleX(0.892);">59.05 µm</div>
<div class="c" style="left:566.1px;top:725.20px;transform:scaleX(0.892);">112.63 µm</div>
<div class="c" style="left:657.7px;top:725.20px;transform:scaleX(0.892);">45.98 µm</div>
</div>
<div>
<div class="c" style="left:11.9px;top:745.35px;transform:scaleX(0.887);">128335</div>
<div class="c" style="left:102.8px;top:745.35px;transform:scaleX(0.873);">High Alloyed Steel</div>
<div class="c" style="left:195.1px;top:745.35px;transform:scaleX(0.887);">50 - 100</div>
<div class="c" style="left:291.3px;top:745.35px;transform:scaleX(0.887);word-spacing:1.6px;">1789.97 µm²</div>
<div class="c" style="left:382.9px;top:745.35px;transform:scaleX(0.892);">47.74 µm</div>
<div class="c" style="left:474.5px;top:745.35px;transform:scaleX(0.892);">67.53 µm</div>
<div class="c" style="left:566.1px;top:745.35px;transform:scaleX(0.892);">71.76 µm</div>
<div class="c" style="left:657.7px;top:745.35px;transform:scaleX(0.892);">44.40 µm</div>
</div>
<div class="abs" style="left:734px;top:322px;width:296px;height:450px;border-radius:6px;box-shadow:0 0 0 0 transparent;background:radial-gradient(closest-side,rgba(0,0,0,.18),rgba(0,0,0,0));display:none;"></div>
<div id="dlg" class="abs" style="left:740.1px;top:326.9px;width:281.3px;height:434.9px;background:#f0f0f0;border:1.1px solid #3389d8;box-sizing:border-box;box-shadow:0 3px 17px rgba(0,0,0,.34);"></div>
<div class="abs" style="left:741.2px;top:328px;width:279.1px;height:27px;background:#fff;"></div>
<!-- title icon -->
<svg class="abs" style="left:748.2px;top:333.2px;" width="16" height="15" viewBox="0 0 16 15">
<rect x=".5" y=".5" width="14.5" height="13.5" fill="#f3f3f3" stroke="#7a7a7a"/>
<rect x="1" y="1" width="13.5" height="2.5" fill="#3b78c8"/>
<circle cx="5.5" cy="8" r="3.2" fill="#2f7fd8"/><circle cx="5.5" cy="8" r="1.2" fill="#e8f0ff"/>
<path d="M9 12V9.500M10.800 12V7.500M12.600 12V10" stroke="#e0531f" stroke-width="1.2"/>
</svg>
<div class="abs" style="left:767.6px;top:334.3px;font-size:11.3px;line-height:14px;color:#000;white-space:nowrap;transform:scaleX(.94);transform-origin:0 50%;">Particle Viewer</div>
<svg class="abs" style="left:900px;top:329.4px;" width="115" height="22" viewBox="900 330 115 22">
<path d="M911 341.300h10" stroke="#c4c4c4" stroke-width="1"/>
<rect x="953" y="336.7" width="8.6" height="8.6" fill="none" stroke="#111" stroke-width="1.1"/>
<path d="M994.700 336.500l9 9M1003.700 336.500l-9 9" stroke="#111" stroke-width="1.1"/>
</svg>
<!-- groupbox -->
<div class="abs" style="left:748.3px;top:368.1px;width:264.5px;height:356.7px;border:1px solid #dcdcdc;box-sizing:border-box;"></div>
<div class="abs" style="left:754.5px;top:361px;width:87px;height:14px;background:#f0f0f0;"></div>
<div class="c" style="left:756.6px;top:363.7px;font-size:10.3px;transform:scaleX(.95);">Particle ID: 129315</div>
<div class="c" style="left:757.4px;top:377.6px;line-height:12px;font-size:10.3px;transform:scaleX(.972);">C:\SmartPI Results\Filter Analysis\Oct 09
13_26\4\Composites\Particles.zip\Particle41.tif</div>
<!-- image -->
<svg class="abs" style="left:755px;top:427px;" width="252" height="212" viewBox="755 427 252 212">
<rect x="755.5" y="427.6" width="250.2" height="210.6" fill="#000"/>
<rect x="755.3" y="427.6" width="250" height="1" fill="#555"/>
<path fill="#fff" fill-rule="evenodd" d="M767.5 511.0 L770.3 511.0 L770.3 508.2 L773.9 508.2 L773.9 496.0 L786.1 496.0 L786.1 492.4 L788.9 492.4 L788.9 489.6 L791.8 489.6 L791.8 486.7 L800.4 486.7 L800.4 483.6 L786.1 483.6 L786.1 474.5 L788.6 474.5 L788.6 471.0 L791.5 471.0 L791.5 465.9 L813.3 465.9 L813.3 462.4 L816.1 462.4 L816.1 459.5 L822.6 459.5 L822.6 456.6 L828.3 456.6 L828.3 453.1 L831.9 453.1 L831.9 450.2 L839.8 450.2 L839.8 453.1 L846.2 453.1 L846.2 456.3 L855.2 456.3 L855.2 453.1 L867.4 453.1 L867.4 450.2 L870.8 450.2 L870.8 453.1 L873.7 453.1 L873.7 456.6 L876.7 456.6 L876.7 465.9 L950.0 465.9 L950.0 492.4 L952.9 492.4 L952.9 498.9 L955.5 498.9 L955.5 510.8 L959.0 510.8 L959.0 520.1 L961.9 520.1 L961.9 535.1 L959.0 535.1 L959.0 541.2 L961.9 541.2 L961.9 544.3 L970.9 544.3 L970.9 541.2 L976.2 541.2 L976.2 547.2 L979.8 547.2 L979.8 550.0 L983.1 550.0 L983.1 556.5 L986.0 556.5 L986.0 568.4 L989.1 568.4 L989.1 575.1 L992.0 575.1 L992.0 580.8 L989.1 580.8 L989.1 589.8 L983.1 589.8 L983.1 593.0 L986.0 593.0 L986.0 598.7 L983.1 598.7 L983.1 602.0 L976.2 602.0 L976.2 598.7 L968.1 598.7 L968.1 602.0 L964.5 602.0 L964.5 604.9 L968.1 604.9 L968.1 608.0 L906.8 608.0 L906.8 611.3 L897.5 611.3 L897.5 608.0 L892.0 608.0 L892.0 611.3 L876.0 611.3 L886.0 611.3 L873.7 611.3 L873.7 608.0 L858.1 608.0 L858.1 604.9 L855.2 604.9 L855.2 608.0 L849.1 608.0 L849.1 611.3 L846.2 611.3 L846.2 614.2 L834.5 614.2 L834.5 611.3 L828.3 611.3 L828.3 608.0 L825.4 608.0 L825.4 604.9 L819.0 604.9 L819.0 595.9 L822.6 595.9 L822.6 593.0 L809.7 593.0 L809.7 589.8 L813.0 589.8 L813.0 587.0 L816.1 587.0 L816.1 584.1 L819.0 584.1 L819.0 580.8 L822.6 580.8 L822.6 574.7 L807.1 574.7 L807.1 565.8 L810.1 565.8 L810.1 562.6 L813.3 562.6 L813.3 556.5 L791.5 556.5 L791.5 553.6 L788.9 553.6 L788.9 550.0 L786.1 550.0 L786.1 547.2 L783.2 547.2 L783.2 540.7 L786.1 540.7 L786.1 537.9 L788.9 537.9 L788.9 535.4 L783.2 535.4 L783.2 537.9 L773.9 537.9 L773.9 531.7 L773.9 531.8 L776.8 531.8 L776.8 528.9 L779.6 528.9 L779.6 526.1 L783.2 526.1 L783.2 523.2 L786.1 523.2 L786.1 516.8 L783.2 516.8 L783.2 519.6 L773.9 519.6 L773.9 516.8 L767.5 516.8Z M828.3 528.3 L836.9 528.3 L836.9 537.9 L839.8 537.9 L839.8 544.3 L836.9 544.3 L836.9 540.7 L831.9 540.7 L831.9 544.3 L825.4 544.3 L825.4 550.0 L822.6 550.0 L822.6 547.2 L816.1 547.2 L816.1 537.9 L825.4 537.9 L825.4 531.4 L828.3 531.4Z M852.6 514.2 L855.5 514.2 L855.5 517.1 L852.6 517.1Z"/>
</svg>
<!-- radios -->
<svg class="abs" style="left:752px;top:644px;" width="20" height="42" viewBox="752 644 20 42">
<circle cx="761.6" cy="653" r="5.6" fill="#fff" stroke="#333" stroke-width="1"/><circle cx="761.6" cy="653" r="2.9" fill="#222"/>
<circle cx="761.6" cy="675" r="5.6" fill="#fff" stroke="#333" stroke-width="1"/>
</svg>
<div class="c" style="left:773.4px;top:648.2px;transform:scaleX(.90);">Particle Image</div>
<div class="c" style="left:773.4px;top:670.2px;transform:scaleX(.90);">Particle source image</div>
<!-- slider -->
<div class="abs" style="left:887.4px;top:652.8px;width:110.6px;height:3.5px;background:#e9ebeb;border:1px solid #d3d3d3;box-sizing:border-box;"></div>
<svg class="abs" style="left:975px;top:645px;" width="16" height="22" viewBox="975 645 16 22"><path d="M977.300 647h10.400v12.500l-5.200 5.300-5.200-5.300z" fill="#0078d7"/></svg>
<div class="abs" style="left:892.1px;top:665.1px;width:102px;height:3.2px;background:repeating-linear-gradient(90deg,#c6c6c6 0,#c6c6c6 5.1px,#e0e0e0 5.1px,#e0e0e0 6.8px);"></div>
<!-- buttons -->
<div class="btn" style="left:860px;top:697.7px;width:66.7px;height:18.9px;"><span>Print</span></div>
<div class="btn" style="left:933.2px;top:697.7px;width:66.7px;height:18.9px;"><span>Compare</span></div>
<div class="btn" style="left:948px;top:734.2px;width:66.5px;height:18.6px;"><span>Close</span></div>
<style>
.btn{position:absolute;background:#e1e1e1;border:1px solid #adadad;box-sizing:border-box;text-align:center;font-size:10.3px;line-height:19px;}
.btn span{display:inline-block;transform:scaleX(.93);}
</style>

</body></html>
